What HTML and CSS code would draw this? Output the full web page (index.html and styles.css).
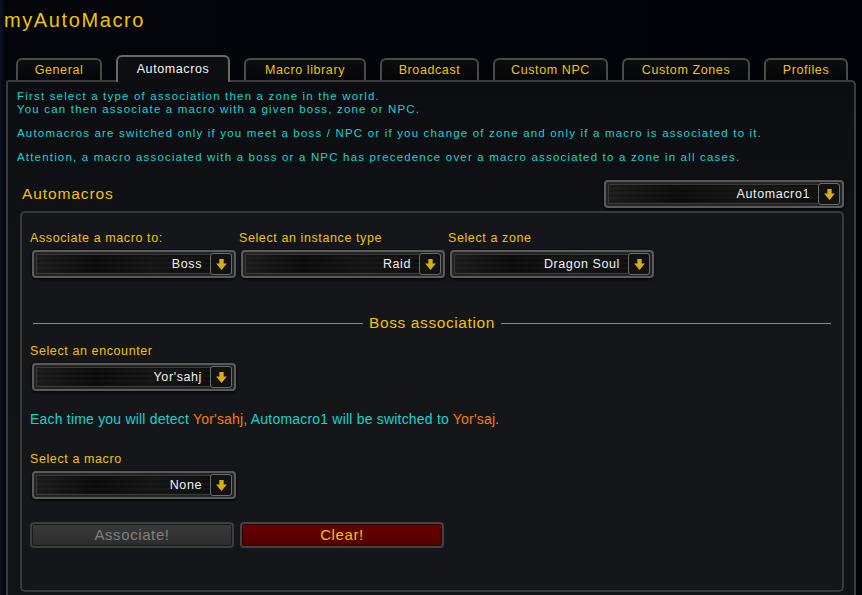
FILE: index.html
```html
<!DOCTYPE html>
<html lang="en">
<head>
    <meta charset="UTF-8">
    <meta name="viewport" content="width=device-width, initial-scale=1.0">
    <title>myAutoMacro</title>
    <link rel="stylesheet" href="styles.css">
</head>
<body>
    <h1 class="title">myAutoMacro</h1>

    <div class="tabs">
        <div class="tab w85">General</div>
        <div class="tab active w113">Automacros</div>
        <div class="tab w122">Macro library</div>
        <div class="tab w99">Broadcast</div>
        <div class="tab w115">Custom NPC</div>
        <div class="tab w128">Custom Zones</div>
        <div class="tab w84">Profiles</div>
    </div>

    <div class="panel">
        <p class="info">First select a type of association then a zone in the world.<br>You can then associate a macro with a given boss, zone or NPC.</p>
        <p class="info">Automacros are switched only if you meet a boss / NPC or if you change of zone and only if a macro is associated to it.</p>
        <p class="info">Attention, a macro associated with a boss or a NPC has precedence over a macro associated to a zone in all cases.</p>

        <div class="headRow">
            <div class="heading">Automacros</div>
            <div class="drop wide">
                <span class="val">Automacro1</span>
                <span class="arrow"><svg viewBox="0 0 12 12"><path d="M4 1h4v4h3L6 11 1 5h3z"/></svg></span>
            </div>
        </div>

        <div class="group">
            <div class="cols">
                <div class="col">
                    <div class="label">Associate a macro to:</div>
                    <div class="drop">
                        <span class="val">Boss</span>
                        <span class="arrow"><svg viewBox="0 0 12 12"><path d="M4 1h4v4h3L6 11 1 5h3z"/></svg></span>
                    </div>
                </div>
                <div class="col">
                    <div class="label">Select an instance type</div>
                    <div class="drop">
                        <span class="val">Raid</span>
                        <span class="arrow"><svg viewBox="0 0 12 12"><path d="M4 1h4v4h3L6 11 1 5h3z"/></svg></span>
                    </div>
                </div>
                <div class="col">
                    <div class="label">Select a zone</div>
                    <div class="drop">
                        <span class="val">Dragon Soul</span>
                        <span class="arrow"><svg viewBox="0 0 12 12"><path d="M4 1h4v4h3L6 11 1 5h3z"/></svg></span>
                    </div>
                </div>
            </div>

            <div class="divider"><span>Boss association</span></div>

            <div class="label">Select an encounter</div>
            <div class="drop">
                <span class="val">Yor'sahj</span>
                <span class="arrow"><svg viewBox="0 0 12 12"><path d="M4 1h4v4h3L6 11 1 5h3z"/></svg></span>
            </div>

            <p class="sentence">Each time you will detect <em>Yor'sahj</em>, Automacro1 will be switched to <em>Yor'saj</em>.</p>

            <div class="label">Select a macro</div>
            <div class="drop">
                <span class="val">None</span>
                <span class="arrow"><svg viewBox="0 0 12 12"><path d="M4 1h4v4h3L6 11 1 5h3z"/></svg></span>
            </div>

            <div class="buttons">
                <div class="btn disabled">Associate!</div>
                <div class="btn red">Clear!</div>
            </div>
        </div>
    </div>
</body>
</html>
```

FILE: styles.css
```css
body {
    margin: 0;
    height: 595px;
    overflow: hidden;
    background: linear-gradient(to right, #0a1424 0px, #03050b 6px, #020308 100%);
    font-family: "Liberation Sans", Arial, sans-serif;
    font-size: 12px;
    letter-spacing: 0.5px;
    color: #f2c300;
}
p { margin: 0; }

.title {
    margin: 0;
    padding: 9px 0 0 4px;
    height: 49px;
    box-sizing: border-box;
    font-weight: normal;
    font-size: 20px;
    letter-spacing: 1.6px;
    color: #f2c300;
}

/* ---------- tabs ---------- */
.tabs {
    display: flex;
    align-items: flex-end;
    gap: 14px;
    padding-left: 16px;
    height: 31px;
    position: relative;
    z-index: 1;
}
.tab {
    height: 22px;
    box-sizing: border-box;
    border: 2px solid #4a4a4a;
    border-bottom: none;
    border-radius: 6px 6px 0 0;
    background: linear-gradient(#0c0d10, #050608);
    text-align: center;
    line-height: 21px;
    font-size: 12.5px;
    letter-spacing: 0.6px;
    color: #f2c300;
}
.tab.active {
    height: 27px;
    line-height: 25px;
    border-color: #6a6a6a;
    background: #0d0e11;
    color: #f4f4f4;
    margin-bottom: -2px;
}
.w85 { width: 86px; }
.w113 { width: 114px; }
.w122 { width: 122px; }
.w99 { width: 99px; }
.w115 { width: 115px; }
.w128 { width: 128px; }
.w84 { width: 84px; }

/* ---------- main panel ---------- */
.panel {
    margin: 0 6px 0 6px;
    height: 520px;
    box-sizing: border-box;
    border: 2px solid #3c3c3e;
    border-bottom: none;
    border-radius: 3px 5px 0 0;
    background: linear-gradient(#0c0d10, #111215 30%, #121316);
    padding: 8px 10px 0 9px;
}
.info {
    color: #16d3cf;
    font-size: 11.5px;
    line-height: 13px;
    letter-spacing: 1.18px;
    margin-bottom: 11px;
}

.headRow {
    display: flex;
    justify-content: space-between;
    align-items: center;
    margin-top: 16px;
    padding-left: 5px;
}
.heading {
    font-size: 15.5px;
    letter-spacing: 0.9px;
}

.group {
    margin-top: 3px;
    margin-left: 3px;
    border: 2px solid #3a3a3c;
    border-radius: 5px;
    height: 381px;
    box-sizing: border-box;
    background: #151619;
    padding: 18px 0 0 8px;
}
.cols {
    display: flex;
    gap: 1px;
}
.col { width: 208px; }
.label {
    font-size: 12.5px;
    line-height: 14px;
    letter-spacing: 0.6px;
    margin-bottom: 5px;
}

/* dropdown */
.drop {
    width: 204px;
    height: 28px;
    margin-left: 2px;
    box-sizing: border-box;
    border: 2px solid #5b5b5b;
    border-radius: 4px;
    box-shadow: inset 0 0 0 2px #232323, inset 0 0 0 3px #3a3a3a, 0 1px 3px #000;
    background:
        repeating-linear-gradient(to bottom, rgba(255,255,255,0.025) 0 2px, transparent 2px 5px),
        linear-gradient(to right, #1c1c1c, #0b0b0b 30%, #141414 60%, #0c0c0c);
    display: flex;
    align-items: center;
    justify-content: flex-end;
    padding-right: 2px;
}
.drop.wide { width: 240px; }
.val {
    color: #f0f0f0;
    font-size: 12.5px;
    letter-spacing: 0.6px;
    margin-right: 8px;
}
.arrow {
    width: 22px;
    height: 22px;
    box-sizing: border-box;
    border: 1px solid #6b6b6b;
    border-radius: 3px;
    background: #121212;
    display: flex;
    align-items: center;
    justify-content: center;
}
.arrow svg {
    width: 13px;
    height: 13px;
    fill: #d6ad16;
}

.divider {
    display: flex;
    align-items: center;
    margin: 36px 11px 12px 3px;
    font-size: 15.5px;
    letter-spacing: 0.6px;
}
.divider::before,
.divider::after {
    content: "";
    flex: 1;
    height: 1px;
    background: #8a8a8a;
}
.divider span { padding: 0 6px 0 6px; }

.sentence {
    color: #16d3cf;
    font-size: 14px;
    letter-spacing: 0.2px;
    margin: 20px 0 25px 0;
}
.sentence em {
    font-style: normal;
    color: #f27d0c;
}

.buttons {
    display: flex;
    gap: 6px;
    margin-top: 23px;
}
.btn {
    width: 204px;
    height: 26px;
    box-sizing: border-box;
    border: 2px solid #3e3e3e;
    border-radius: 4px;
    text-align: center;
    line-height: 22px;
    font-size: 15px;
    letter-spacing: 0.6px;
}
.btn.disabled {
    background: linear-gradient(#3a3a3a, #2c2c2c);
    box-shadow: inset 0 0 0 1px #1a1a1a;
    color: #808080;
}
.btn.red {
    background: linear-gradient(#6a0000, #540000);
    box-shadow: inset 0 0 0 1px #2a0000;
    border-color: #444;
    color: #f2c300;
}
```
